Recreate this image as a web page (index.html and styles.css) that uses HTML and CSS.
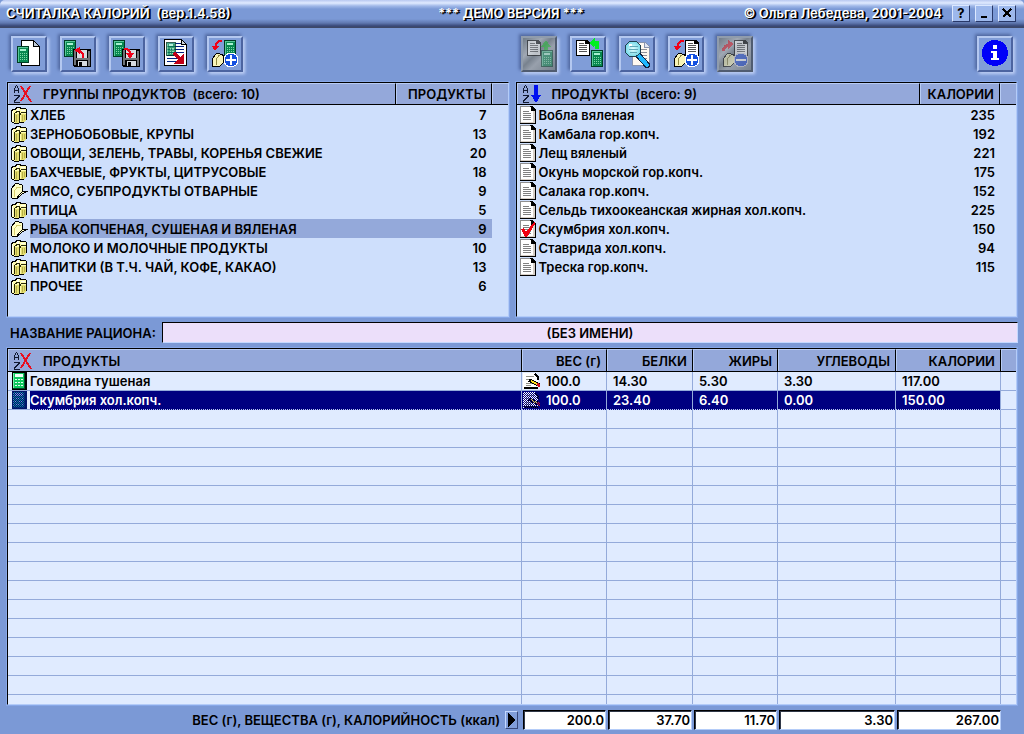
FILE: index.html
```html
<!DOCTYPE html>
<html lang="ru">
<head>
<meta charset="utf-8">
<title>Считалка калорий</title>
<link rel="stylesheet" href="styles.css">
</head>
<body>
<svg class="defs" aria-hidden="true">
  <defs>
    <symbol id="calc" viewBox="0 0 12 17">
      <path fill="#003c24" d="M0 0h12v17H0z"/><path fill="#088850" d="M1 1h10v15H1z"/>
      <path fill="#58c898" d="M1 1h10v1H1zM1 2h1v14H1z"/><path fill="#a8f0d0" d="M3 3h6v2H3z"/>
      <path fill="#80d8a8" d="M3 7h1v1H3zm2 0h1v1H5zm2 0h1v1H7zm2 0h1v1H9zM3 9h1v1H3zm2 0h1v1H5zm2 0h1v1H7zm2 0h1v1H9zm-6 2h1v1H3zm2 0h1v1H5zm2 0h1v1H7zm2 0h1v1H9zm-6 2h1v1H3zm2 0h1v1H5zm2 0h1v1H7zm2 0h1v1H9z"/>
    </symbol>
    <symbol id="floppy" viewBox="0 0 18 18">
      <path fill="#000" d="M0 0h18v18H1l-1-1z"/><path fill="#707478" d="M1 1h2v15H1zm14 1h2v15h-2zM3 9h12v2H3z"/>
      <path fill="#d8dce0" d="M4 1h10v8H4zM5 12h9v5H5z"/><path fill="#000" d="M6 13h3v4H6z"/>
    </symbol>
    <symbol id="folder" viewBox="0 0 14 16">
      <path fill="#f8f4b8" stroke="#000" d="M1.500 14.500v-8l3-4 1-1h3l1 1h2l1 2v6l-4 4h-7z"/>
      <path fill="none" stroke="#908840" d="M5.500 13v-6l3-4"/>
    </symbol>
    <symbol id="page" viewBox="0 0 14 16">
      <path fill="#fff" stroke="#000" d="M.500.500h11l2 2v13H.500z"/><path stroke="#555" d="M3 3.500h5M3 5.500h8M3 7.500h8M3 9.500h8M3 11.500h8"/><path stroke="#000" stroke-width="2" d="M10 0v3h4"/>
    </symbol>
    <symbol id="plus" viewBox="0 0 16 16">
      <circle cx="8" cy="8" r="7.500" fill="#fff"/><circle cx="8" cy="8" r="6.500" fill="#1450e0"/><path fill="#fff" d="M7 3h2v4h4v2H9v4H7V9H3V7h4z"/>
    </symbol>
    <symbol id="swoop" viewBox="0 0 10 12">
      <path fill="none" stroke="#f00018" stroke-width="2" d="M9.500 1C5 1 4 3 3.500 7"/><path fill="#f00018" d="M0 6h7l-4 5z"/>
    </symbol>
    <symbol id="groups" viewBox="0 0 18 18">
      <path fill="#fffcae" stroke="#000" d="M1.500 15.500v-11l2-1h2l1-2h3l2 1h4l1 1v10l-3 3h-4l-1 1h-4z"/>
      <path fill="#e4de70" d="M5 8h4v9H5zM11 8h5v6l-2 2h-3z"/>
      <path fill="#fffff0" d="M2 5h1v10H2zm5-3h2v3H7zm4 2h4v1h-4z"/>
      <path fill="none" stroke="#282808" d="M4.500 16V7.500L7 5.500h2.500V9M9.500 16V9l2-2.500H16"/>
      <path fill="none" stroke="#b8b048" d="M12.500 9v6M14.500 9v5M6.500 9v7"/>
    </symbol>
    <symbol id="open" viewBox="0 0 18 18">
      <path fill="#ffffc8" stroke="#000" d="M1.500 15.500V6.500l4-5h3l1 1h2l1 1v6h5l-5 2-5 5h-5z"/><path fill="none" stroke="#d8d070" d="M4.500 15v-6l3-4h3"/>
      <path fill="none" stroke="#000" d="M12.500 9.500l-3 3-3 4"/>
    </symbol>
    <symbol id="sheet" viewBox="0 0 16 18">
      <path fill="#909090" d="M0 0h11v18H0z"/><path fill="#000" d="M10 0h2l4 4v14H0v-1h11z"/><path fill="#fff" d="M1 1h10v4h4v12H1z"/><path fill="#d8d0c8" d="M13 5h2v12H1v-1h12z"/>
      <path stroke="#808080" d="M3 5.500h6M3 7.500h8M3 9.500h8M3 11.500h8M3 13.500h8"/>
    </symbol>
    <symbol id="unsorted" viewBox="0 0 20 20">
      <path fill="none" stroke="#101830" d="M1.500 9V4.500l2-3 2 3V9M2 6.500h4M1 11.500h5v1L1.500 17v1.500H7"/>
      <path fill="none" stroke="#e81020" stroke-width="2" d="M8 2l10 16M17 2L8 17"/>
    </symbol>
    <symbol id="sorted" viewBox="0 0 20 20">
      <path fill="none" stroke="#101830" d="M1.500 9V4.500l2-3 2 3V9M2 6.500h4M1 11.500h5v1L1.500 17v1.500H7"/>
      <path fill="#0010f0" d="M12 1h4v10h3l-5 8-5-8h3z"/>
    </symbol>
    <symbol id="device" viewBox="0 0 15 18">
      <path fill="#000" d="M0 0h15v18H0z"/><path fill="#10c860" d="M1 1h11v15H1z"/><path fill="#70f8a8" d="M1 1h1v15H1z"/><path fill="#004828" d="M12 1h1v16H1v-1h11z"/><path fill="#f0fff8" d="M3 2h8v3H3z"/>
      <path fill="#e0fff0" d="M3 7h2v1H3zm3 0h2v1H6zm3 0h2v1H9zm-6 3h2v1H3zm3 0h2v1H6zm3 0h2v1H9zm-6 3h2v1H3zm3 0h2v1H6zm3 0h2v1H9z"/>
    </symbol>
    <symbol id="edit" viewBox="0 0 18 17">
      <path fill="#fff" d="M0 0h12l3 4v12H0z"/><path stroke="#909088" d="M3 3.500h8M3 6.500h4M3 10.500h7M3 12.500h5"/><path stroke="#000" stroke-width="2" d="M12 1l3 3v3M1 15h14"/>
      <path stroke="#000" stroke-width="4" d="M6 7l10 5"/><path stroke="#ffe020" stroke-width="2" d="M8 8l6 3"/><path stroke="#d01020" stroke-width="3" d="M14 11l3 2"/>
    </symbol>
    <pattern id="dither" width="2" height="2" patternUnits="userSpaceOnUse"><path fill="#000080" d="M0 0h1v1H0zM1 1h1v1H1z"/></pattern>
    <radialGradient id="glass"><stop offset="0" stop-color="#e8ffff"/><stop offset="1" stop-color="#70d8e8"/></radialGradient>
  </defs>
</svg>
<main class="app">
  <header class="titlebar">
    <h1 class="title">СЧИТАЛКА КАЛОРИЙ&nbsp; (вер.1.4.58)</h1>
    <span class="title-mid">*** ДЕМО ВЕРСИЯ ***</span>
    <div class="title-end">
      <span>© Ольга Лебедева, 2001-2004</span>
      <button class="winbtn" aria-label="Справка">?</button>
      <button class="winbtn" aria-label="Свернуть"><svg width="14" height="14"><path fill="#000" d="M4 10h6v2H4z"/></svg></button>
      <button class="winbtn" aria-label="Закрыть"><svg width="14" height="14"><path stroke="#000" stroke-width="2" d="M3 3l8 8M11 3l-8 8"/></svg></button>
    </div>
  </header>
  <nav class="toolbar">
    <div class="tools">
      <button class="tool" aria-label="Новый рацион"><svg viewBox="0 0 32 32"><path fill="#fff" stroke="#000" d="M8.500 2.500h12l6 6v19h-18z"/><path fill="#c0ccd8" stroke="#000" d="M20.500 2.500v6h6z"/><use href="#calc" x="4" y="8" width="12" height="17"/></svg></button>
      <button class="tool" aria-label="Открыть рацион"><svg viewBox="0 0 32 32"><use href="#calc" x="2" y="2" width="12" height="17"/><use href="#floppy" x="11" y="11" width="18" height="18"/><path fill="none" stroke="#f00018" stroke-width="2" d="M21 20v-3c0-3-2-4-6-5"/><path fill="#f00018" d="M12 12l6-3v7z"/></svg></button>
      <button class="tool" aria-label="Сохранить рацион"><svg viewBox="0 0 32 32"><use href="#calc" x="2" y="2" width="12" height="17"/><use href="#floppy" x="11" y="11" width="18" height="18"/><path fill="none" stroke="#f00018" stroke-width="2" d="M13 11c5 0 6 1 6 6"/><path fill="#f00018" d="M15 15h8l-4 6z"/></svg></button>
      <button class="tool" aria-label="Отчёт"><svg viewBox="0 0 32 32"><path fill="#fff" stroke="#000" d="M4.500 1.500h17l5 5v21h-22z"/><path fill="#d0d8e0" stroke="#000" d="M21.500 1.500v5h5z"/><path stroke="#002080" d="M7 5.500h14M7 8.500h17M7 11.500h17M7 14.500h17M7 17.500h12M7 20.500h11M7 23.500h11"/><use href="#calc" x="6" y="4" width="10" height="14" opacity=".8"/><path fill="none" stroke="#c00018" stroke-width="4" d="M14 15l8 8"/><path fill="#c00018" d="M24 15v11H13z"/></svg></button>
      <button class="tool" aria-label="Добавить группу"><svg viewBox="0 0 32 32"><use href="#calc" x="15" y="2" width="12" height="17"/><use href="#folder" x="2" y="14" width="14" height="16"/><use href="#swoop" x="3" y="2" width="10" height="12"/><use href="#plus" x="14" y="14" width="16" height="16"/></svg></button>
    </div>
    <div class="tools tools-right">
      <button class="tool" disabled aria-label="Убрать из рациона"><svg viewBox="0 0 32 32"><use href="#page" x="4" y="2" width="14" height="16"/><use href="#calc" x="18" y="12" width="12" height="17"/><path fill="#20c030" d="M18 9l5-7 5 7h-3v3h-4V9z"/></svg></button>
      <button class="tool" aria-label="В рацион"><svg viewBox="0 0 32 32"><use href="#page" x="4" y="2" width="14" height="16"/><use href="#calc" x="19" y="12" width="12" height="17"/><path fill="#00f020" d="M17 5l6-5v3h4v8h-4V7l-1 2z"/></svg></button>
      <button class="tool" aria-label="Поиск"><svg viewBox="0 0 32 32"><path fill="#fff8f0" stroke="#8894b0" d="M11.500 4.500h13l4 4v19h-17z"/><path fill="#e0e4f0" stroke="#8894b0" d="M23.500 4.500v5h5"/><path stroke="#909098" d="M18 11.500h8M19 14.500h7M19 17.500h7M20 20.500h6M22 23.500h4"/><path stroke="#102040" stroke-width="6" stroke-linecap="round" d="M18 18l8 9"/><path stroke="#20b8ff" stroke-width="4" stroke-linecap="round" d="M18 18l8 9"/><circle cx="12" cy="11" r="8" fill="url(#glass)" stroke="#204050"/><path stroke="#60a8b8" d="M9 8.500h8M8 11.500h9M9 14.500h7"/><path fill="#fff" d="M8 6h3v2H8z"/></svg></button>
      <button class="tool" aria-label="Добавить продукт"><svg viewBox="0 0 32 32"><use href="#page" x="15" y="2" width="14" height="16"/><use href="#folder" x="3" y="14" width="14" height="16"/><use href="#swoop" x="4" y="2" width="10" height="12"/><use href="#plus" x="14" y="14" width="16" height="16"/></svg></button>
      <button class="tool" disabled aria-label="Удалить продукт"><svg viewBox="0 0 32 32"><use href="#page" x="15" y="2" width="14" height="16"/><use href="#folder" x="3" y="14" width="14" height="16"/><path fill="none" stroke="#d01020" stroke-width="3" d="M4 13c1-4 3-6 7-6"/><path fill="#d01020" d="M9 2l6 4-6 5z"/><circle cx="22" cy="22" r="7" fill="#1440d0" stroke="#ccd"/><path fill="#fff" d="M17 21h10v2H17z"/></svg></button>
      <button class="tool info" aria-label="О программе"><svg viewBox="0 0 32 32"><circle cx="16" cy="15" r="13" fill="#0000f8"/><path fill="#fff" d="M14 7h4v4h-4zM12 13h6v7h2v2h-8v-2h2v-5h-2z"/></svg></button>
    </div>
  </nav>
  <div class="lists">
    <section class="panel">
      <table class="list">
        <colgroup><col class="c-icon"><col><col class="c-count"><col class="c-end"></colgroup>
        <thead><tr><th colspan="2"><span class="head"><svg class="sort"><use href="#unsorted"/></svg>ГРУППЫ ПРОДУКТОВ&nbsp; (всего: 10)</span></th><th class="num">ПРОДУКТЫ</th><th></th></tr></thead>
        <tbody>
          <tr><td><svg class="ic"><use href="#groups"/></svg></td><td>ХЛЕБ</td><td class="num">7</td><td></td></tr>
          <tr><td><svg class="ic"><use href="#groups"/></svg></td><td>ЗЕРНОБОБОВЫЕ, КРУПЫ</td><td class="num">13</td><td></td></tr>
          <tr><td><svg class="ic"><use href="#groups"/></svg></td><td>ОВОЩИ, ЗЕЛЕНЬ, ТРАВЫ, КОРЕНЬЯ СВЕЖИЕ</td><td class="num">20</td><td></td></tr>
          <tr><td><svg class="ic"><use href="#groups"/></svg></td><td>БАХЧЕВЫЕ, ФРУКТЫ, ЦИТРУСОВЫЕ</td><td class="num">18</td><td></td></tr>
          <tr><td><svg class="ic"><use href="#open"/></svg></td><td>МЯСО, СУБПРОДУКТЫ ОТВАРНЫЕ</td><td class="num">9</td><td></td></tr>
          <tr><td><svg class="ic"><use href="#groups"/></svg></td><td>ПТИЦА</td><td class="num">5</td><td></td></tr>
          <tr class="current"><td><svg class="ic"><use href="#open"/></svg></td><td>РЫБА КОПЧЕНАЯ, СУШЕНАЯ И ВЯЛЕНАЯ</td><td class="num">9</td><td></td></tr>
          <tr><td><svg class="ic"><use href="#groups"/></svg></td><td>МОЛОКО И МОЛОЧНЫЕ ПРОДУКТЫ</td><td class="num">10</td><td></td></tr>
          <tr><td><svg class="ic"><use href="#groups"/></svg></td><td>НАПИТКИ (В Т.Ч. ЧАЙ, КОФЕ, КАКАО)</td><td class="num">13</td><td></td></tr>
          <tr><td><svg class="ic"><use href="#groups"/></svg></td><td>ПРОЧЕЕ</td><td class="num">6</td><td></td></tr>
        </tbody>
      </table>
    </section>
    <section class="panel">
      <table class="list products">
        <colgroup><col class="c-icon"><col><col class="c-kcal"><col class="c-end"></colgroup>
        <thead><tr><th colspan="2"><span class="head"><svg class="sort"><use href="#sorted"/></svg>ПРОДУКТЫ&nbsp; (всего: 9)</span></th><th class="num">КАЛОРИИ</th><th></th></tr></thead>
        <tbody>
          <tr><td><svg class="ic"><use href="#sheet"/></svg></td><td>Вобла вяленая</td><td class="num">235</td><td></td></tr>
          <tr><td><svg class="ic"><use href="#sheet"/></svg></td><td>Камбала гор.копч.</td><td class="num">192</td><td></td></tr>
          <tr><td><svg class="ic"><use href="#sheet"/></svg></td><td>Лещ вяленый</td><td class="num">221</td><td></td></tr>
          <tr><td><svg class="ic"><use href="#sheet"/></svg></td><td>Окунь морской гор.копч.</td><td class="num">175</td><td></td></tr>
          <tr><td><svg class="ic"><use href="#sheet"/></svg></td><td>Салака гор.копч.</td><td class="num">152</td><td></td></tr>
          <tr><td><svg class="ic"><use href="#sheet"/></svg></td><td>Сельдь тихоокеанская жирная хол.копч.</td><td class="num">225</td><td></td></tr>
          <tr><td><svg class="ic"><use href="#sheet"/><path fill="#f00010" d="M1 9l3-1 2 4 9-11v3L7 17H5z"/></svg></td><td>Скумбрия хол.копч.</td><td class="num">150</td><td></td></tr>
          <tr><td><svg class="ic"><use href="#sheet"/></svg></td><td>Ставрида хол.копч.</td><td class="num">94</td><td></td></tr>
          <tr><td><svg class="ic"><use href="#sheet"/></svg></td><td>Треска гор.копч.</td><td class="num">115</td><td></td></tr>
        </tbody>
      </table>
    </section>
  </div>
  <div class="name-row">
    <label for="ration">НАЗВАНИЕ РАЦИОНА:</label>
    <input id="ration" class="name" type="text" value="(БЕЗ ИМЕНИ)">
  </div>
  <section class="panel ration">
    <table class="list grid">
      <colgroup><col class="c-dev"><col><col class="c-w"><col class="c-p"><col class="c-w"><col class="c-u"><col class="c-k"><col class="c-last"></colgroup>
      <thead><tr><th colspan="2"><span class="head"><svg class="sort"><use href="#unsorted"/></svg>ПРОДУКТЫ</span></th><th class="num">ВЕС (г)</th><th class="num">БЕЛКИ</th><th class="num">ЖИРЫ</th><th class="num">УГЛЕВОДЫ</th><th class="num">КАЛОРИИ</th><th></th></tr></thead>
      <tbody>
        <tr><td><svg class="dev"><use href="#device"/></svg></td><td>Говядина тушеная</td><td><span class="weight"><svg class="edit"><use href="#edit"/></svg>100.0</span></td><td>14.30</td><td>5.30</td><td>3.30</td><td>117.00</td><td></td></tr>
        <tr class="selected"><td><svg class="dev"><use href="#device"/><path fill="#0058a8" opacity=".5" d="M0 0h15v18H0z"/><path fill="url(#dither)" d="M0 0h15v18H0z"/></svg></td><td>Скумбрия хол.копч.</td><td><span class="weight"><svg class="edit"><use href="#edit"/><path fill="url(#dither)" d="M0 0h18v17H0z"/></svg>100.0</span></td><td>23.40</td><td>6.40</td><td>0.00</td><td>150.00</td><td></td></tr>
        <tr><td></td><td></td><td></td><td></td><td></td><td></td><td></td><td></td></tr>
        <tr><td></td><td></td><td></td><td></td><td></td><td></td><td></td><td></td></tr>
        <tr><td></td><td></td><td></td><td></td><td></td><td></td><td></td><td></td></tr>
        <tr><td></td><td></td><td></td><td></td><td></td><td></td><td></td><td></td></tr>
        <tr><td></td><td></td><td></td><td></td><td></td><td></td><td></td><td></td></tr>
        <tr><td></td><td></td><td></td><td></td><td></td><td></td><td></td><td></td></tr>
        <tr><td></td><td></td><td></td><td></td><td></td><td></td><td></td><td></td></tr>
        <tr><td></td><td></td><td></td><td></td><td></td><td></td><td></td><td></td></tr>
        <tr><td></td><td></td><td></td><td></td><td></td><td></td><td></td><td></td></tr>
        <tr><td></td><td></td><td></td><td></td><td></td><td></td><td></td><td></td></tr>
        <tr><td></td><td></td><td></td><td></td><td></td><td></td><td></td><td></td></tr>
        <tr><td></td><td></td><td></td><td></td><td></td><td></td><td></td><td></td></tr>
        <tr><td></td><td></td><td></td><td></td><td></td><td></td><td></td><td></td></tr>
        <tr><td></td><td></td><td></td><td></td><td></td><td></td><td></td><td></td></tr>
        <tr><td></td><td></td><td></td><td></td><td></td><td></td><td></td><td></td></tr>
        <tr><td></td><td></td><td></td><td></td><td></td><td></td><td></td><td></td></tr>
      </tbody>
    </table>
  </section>
  <footer class="totals">
    <div class="totals-label"><span>ВЕС (г), ВЕЩЕСТВА (г), КАЛОРИЙНОСТЬ (ккал)</span><button class="play" aria-label="Подробнее"><svg width="8" height="14"><path fill="#000" d="M0 0l8 7-8 7z"/></svg></button></div>
    <input class="sum" aria-label="Вес" readonly value="200.0">
    <input class="sum" aria-label="Белки" readonly value="37.70">
    <input class="sum" aria-label="Жиры" readonly value="11.70">
    <input class="sum" aria-label="Углеводы" readonly value="3.30">
    <input class="sum" aria-label="Калории" readonly value="267.00">
  </footer>
</main>
</body>
</html>
```

FILE: styles.css
```css
* { box-sizing: border-box; }
body { margin: 0; background: #7b99d6; color: #000; font: 600 13px/18px Inter, "Liberation Sans", sans-serif; }
button, input { font: inherit; color: inherit; border-radius: 0; }
button { padding: 0; }
svg { display: block; shape-rendering: crispEdges; }
.defs { position: absolute; width: 0; height: 0; }
.app { display: flex; flex-direction: column; height: 100vh; min-height: 500px; overflow: hidden; }

.titlebar {
  display: grid; grid-template-columns: 1fr auto 1fr; align-items: center; flex: none;
  height: 28px; padding: 0 8px 2px 6px; color: #fff; text-shadow: 1px 1px 0 #000, 2px 1px 0 #000;
  background: linear-gradient(#b8c8f0 0, #e0eaff 3px, #a0b8e8 6px, #7b99d6 9px, #7b99d6 19px, #6078b0 23px, #384878 26px, #404860 28px);
  border-radius: 5px 5px 0 0;
}
.title { margin: 0; font: inherit; }
.title-end { display: flex; justify-content: flex-end; align-items: center; gap: 5px; white-space: nowrap; }
.title-end span { padding-right: 5px; }
.winbtn {
  display: grid; place-items: center; width: 18px; height: 17px; background: #9db8ec; color: #000;
  border: 1px solid; border-color: #dce8ff #283868 #283868 #dce8ff; line-height: 14px; font-weight: 700;
}
.toolbar { display: grid; grid-template-columns: 1fr 1fr; align-items: center; flex: none; height: 54px; padding: 0 11px 3px; }
.tools { display: flex; gap: 13px; }
.tools-right { padding-left: 9px; }
.info { margin-left: auto; }
.tool {
  width: 36px; height: 36px; flex: none; background: #809dd8;
  border: 2px solid; border-color: #b4c8f0 #4c64a0 #4c64a0 #b4c8f0;
  box-shadow: -2px -2px 3px #5068a0, 2px 2px 3px #c4d4f8;
}
.tool svg { width: 32px; height: 32px; }
.tool:disabled { background: linear-gradient(135deg, #707c88, #a0a8b4 30%, #78828e 45%, #98a0ac 60%, #78828e); border-color: #909cac #505c70 #505c70 #909cac; }
.tool:disabled svg { opacity: .5; }

.lists { display: grid; grid-template-columns: 1fr 1fr; gap: 7px; flex: none; padding: 0 7px; }
.panel {
  background: #cedffc; border: 1px solid; border-color: #000 #b4ccf8 #b4ccf8 #000;
  outline: 1px solid #88a8e8; overflow: hidden; min-height: 235px;
}
.list { width: 100%; border-collapse: separate; border-spacing: 0; table-layout: fixed; }
.list th {
  height: 22px; padding: 0 5px; background: #94a8da; border-bottom: 1px solid #000; border-top: 1px solid #b8ccf4;
  border-right: 1px solid #000; box-shadow: inset 1px 0 #b8ccf4; font-weight: inherit; text-align: left; white-space: nowrap; line-height: 20px;
}
.list th:last-child { border-right: 0; }
.list td { height: 19px; padding: 0; line-height: 18px; white-space: nowrap; }
.list .num { text-align: right; padding-right: 5px; }
.head { display: flex; align-items: center; gap: 10px; }
.sort { width: 20px; height: 20px; }
.ic { width: 18px; height: 18px; margin-left: 2px; }
.products .ic { width: 16px; margin-left: 3px; }
.c-icon { width: 22px; }
.c-count { width: 96px; }
.c-kcal { width: 80px; }
.c-end { width: 16px; }
.current td:nth-child(2), .current td:nth-child(3) { background: #94a9da; }

.name-row { display: flex; align-items: center; flex: none; gap: 6px; padding: 5px 6px 4px 10px; }
.name {
  flex: 1; min-width: 0; height: 21px; padding: 0; text-align: center; background: #ecdffa;
  border: 1px solid; border-color: #000 #c4d8ff #c4d8ff #000;
}
.ration { flex: 1; min-height: 0; margin: 1px 7px 0; background: #e0ebff; }
.grid th { height: 23px; }
.grid td { border-right: 1px solid #94aada; border-bottom: 1px solid #94aada; padding-left: 6px; }
.grid td:first-child { border-right: 0; padding-left: 4px; }
.grid td:nth-child(2), .grid td:nth-child(3) { padding-left: 0; }
.grid td:last-child { border-right: 0; }
.c-dev { width: 22px; }
.c-w { width: 85px; }
.c-p { width: 86px; }
.c-u { width: 118px; }
.c-k { width: 105px; }
.c-last { width: 15px; }
.dev { width: 15px; height: 18px; }
.weight { display: flex; align-items: center; gap: 5px; padding-left: 1px; }
.edit { width: 18px; height: 17px; }
.selected td:not(:first-child):not(:last-child) { background: #000080; color: #fff; border-bottom: 1px dotted #b8c8f0; }

.totals { display: grid; grid-template-columns: minmax(0, 1fr) 83px 84px 83px 116px 104px; gap: 2px; flex: none; padding: 5px 23px 4px 7px; }
.totals-label { display: flex; justify-content: flex-end; align-items: center; gap: 5px; padding-right: 3px; white-space: nowrap; }
.play { display: grid; place-items: center; width: 13px; height: 18px; background: #809dd8; border: 1px solid; border-color: #c4d8ff #384878 #384878 #c4d8ff; }
.sum { width: 100%; height: 20px; padding: 0 1px; text-align: right; background: #fff; border: 1px solid; border-color: #000 #b4ccf8 #b4ccf8 #000; box-shadow: inset 1px 1px #303848; }
```
